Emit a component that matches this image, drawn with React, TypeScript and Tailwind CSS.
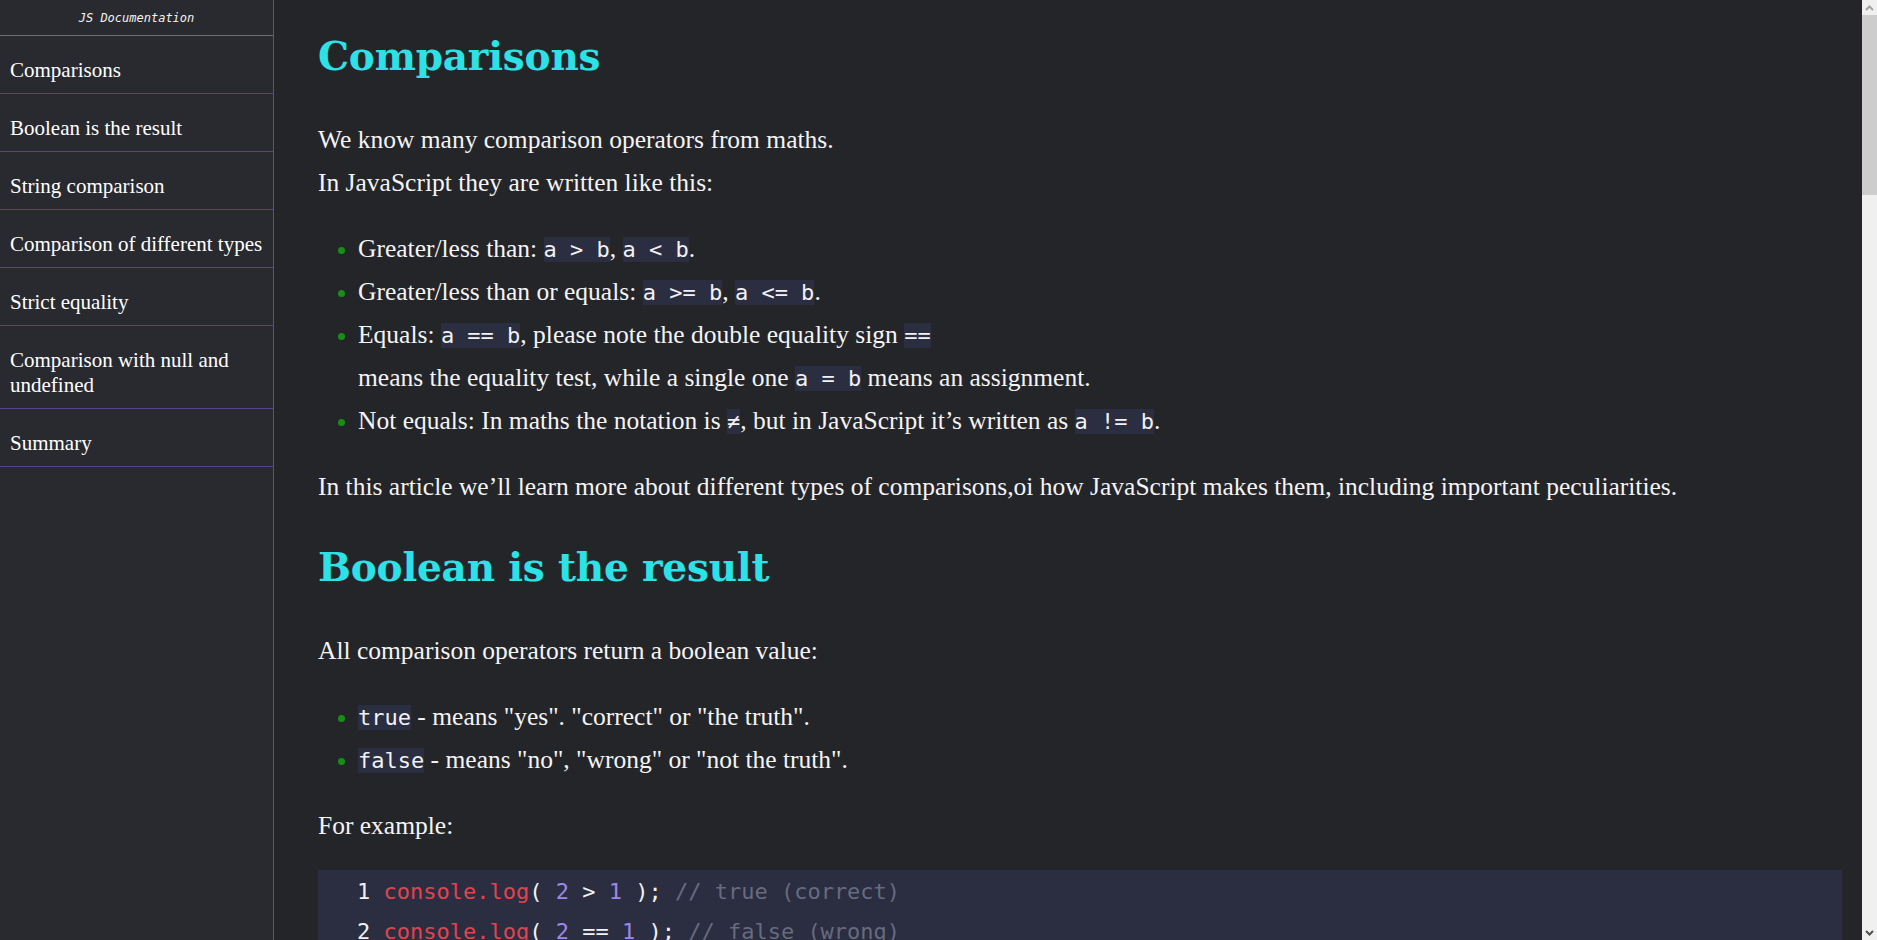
import React from "react";

const navItems = [
  "Comparisons",
  "Boolean is the result",
  "String comparison",
  "Comparison of different types",
  "Strict equality",
  "Comparison with null and undefined",
  "Summary",
];

function C({ children }: { children: React.ReactNode }) {
  return (
    <code className="bg-[#2b2d41] font-['DejaVu_Sans_Mono',monospace] text-[22px] leading-[20px] text-[#f2f2f2]">
      {children}
    </code>
  );
}

type Tok = [string, string];

function Line({ n, toks }: { n: number; toks: Tok[] }) {
  return (
    <div className="whitespace-pre">
      <span className="text-[#f2f2f2]">{n} </span>
      {toks.map((t, i) => (
        <span key={i} className={t[0]}>
          {t[1]}
        </span>
      ))}
    </div>
  );
}

const R = "text-[#e2434f]";
const W = "text-[#f2f2f2]";
const P = "text-[#9f86ea]";
const G = "text-[#676b7e]";
const K = "text-[#2fd3d8]";

function Code({ lines }: { lines: Tok[][] }) {
  return (
    <div className="bg-[#2b2d41] font-['DejaVu_Sans_Mono',monospace] text-[22px] leading-[40px] pl-[39px] pt-[2px] pb-[8px] my-[23px]">
      {lines.map((l, i) => (
        <Line key={i} n={i + 1} toks={l} />
      ))}
    </div>
  );
}

function H({ children, first }: { children: React.ReactNode; first?: boolean }) {
  return (
    <h2
      className={
        first
          ? "font-['DejaVu_Serif',serif] font-bold text-[39px] leading-[64px] tracking-[-0.2px] text-[#2de2e6] mb-[30px]"
          : "font-['DejaVu_Serif',serif] font-bold text-[39px] leading-[64px] tracking-[-0.2px] text-[#2de2e6] mt-[27px] mb-[30px]"
      }
    >
      {children}
    </h2>
  );
}

function UL({ children }: { children: React.ReactNode }) {
  return <ul className="list-disc pl-[40px] my-[23px] marker:text-[#158f15] marker:text-[23px]">{children}</ul>;
}

function ScrollBar() {
  return (
    <div className="w-[15px] shrink-0 h-full bg-[#f0f0f0] flex flex-col">
      <div className="h-[15px] flex items-center justify-center">
        <svg width="9" height="6" viewBox="0 0 9 6">
          <polyline points="1,5 4.5,1.5 8,5" fill="none" stroke="#a3a3a3" strokeWidth="2" />
        </svg>
      </div>
      <div className="h-[180px] bg-[#cdcdcd]" />
      <div className="flex-1" />
      <div className="h-[15px] flex items-center justify-center">
        <svg width="9" height="6" viewBox="0 0 9 6">
          <polyline points="1,1 4.5,4.5 8,1" fill="none" stroke="#505050" strokeWidth="2" />
        </svg>
      </div>
    </div>
  );
}

export default function App() {
  return (
    <div className="flex h-screen w-full overflow-hidden bg-[#242529]">
      <nav className="w-[274px] shrink-0 h-full bg-[#292a2f] border-r border-[#2f5bc4] text-white font-['Liberation_Serif',serif]">
        <div className="h-[36px] border-b border-[#707070] flex items-center justify-center font-['DejaVu_Sans_Mono',monospace] italic text-[12px] text-[#f2f2f2]">
          JS Documentation
        </div>
        {navItems.map((it) => (
          <a
            key={it}
            href="#"
            className="block border-b border-[#5e3d92] pt-[22px] pb-[10px] px-[10px] text-[21px] leading-[25px] text-white"
          >
            {it}
          </a>
        ))}
      </nav>
      <main className="flex-1 min-w-0 h-full overflow-hidden pl-[44px] pr-[20px] pt-[24px] pb-[40px] text-[#f4f4f4] font-['Liberation_Serif',serif] text-[25.5px] leading-[43px]">
        <H first>Comparisons</H>
        <p>We know many comparison operators from maths.</p>
        <p>In JavaScript they are written like this:</p>
        <UL>
          <li>
            Greater/less than: <C>a &gt; b</C>, <C>a &lt; b</C>.
          </li>
          <li>
            Greater/less than or equals: <C>a &gt;= b</C>, <C>a &lt;= b</C>.
          </li>
          <li>
            Equals: <C>a == b</C>, please note the double equality sign <C>==</C>
            <br />
            means the equality test, while a single one <C>a = b</C> means an assignment.
          </li>
          <li>
            Not equals: In maths the notation is <C>≠</C>, but in JavaScript it’s written as <C>a != b</C>.
          </li>
        </UL>
        <p>
          In this article we’ll learn more about different types of comparisons,oi how JavaScript makes them, including
          important peculiarities.
        </p>

        <H>Boolean is the result</H>
        <p>All comparison operators return a boolean value:</p>
        <UL>
          <li>
            <C>true</C> - means "yes". "correct" or "the truth".
          </li>
          <li>
            <C>false</C> - means "no", "wrong" or "not the truth".
          </li>
        </UL>
        <p>For example:</p>
        <Code
          lines={[
            [[R, "console.log"], [W, "( "], [P, "2"], [W, " > "], [P, "1"], [W, " ); "], [G, "// true (correct)"]],
            [[R, "console.log"], [W, "( "], [P, "2"], [W, " == "], [P, "1"], [W, " ); "], [G, "// false (wrong)"]],
            [[R, "console.log"], [W, "( "], [P, "2"], [W, " != "], [P, "1"], [W, " ); "], [G, "// true (correct)"]],
          ]}
        />
        <p>A comparison result can be assigned to a variable, just like any value:</p>
        <Code
          lines={[
            [[K, "let"], [W, " result = "], [P, "5"], [W, " > "], [P, "4"], [W, "; "], [G, "// assign the result of the comparison"]],
            [[R, "console.log"], [W, "( result ); "], [G, "// true"]],
          ]}
        />

        <H>String comparison</H>
        <p>To see whether a string is greater than another, JavaScript uses the so-called “dictionary” or “lexicographical” order.</p>
        <p>In other words, strings are compared letter-by-letter.</p>
        <p>For example:</p>
        <Code
          lines={[
            [[R, "console.log"], [W, "( "], [P, "'Z'"], [W, " > "], [P, "'A'"], [W, " ); "], [G, "// true"]],
            [[R, "console.log"], [W, "( "], [P, "'Glow'"], [W, " > "], [P, "'Glee'"], [W, " ); "], [G, "// true"]],
            [[R, "console.log"], [W, "( "], [P, "'Bee'"], [W, " > "], [P, "'Be'"], [W, " ); "], [G, "// true"]],
          ]}
        />
        <p>The algorithm to compare two strings is simple:</p>
        <UL>
          <li>Compare the first character of both strings.</li>
          <li>If the first character from the first string is greater (or less) than the other string’s, then the first string is greater (or less) than the second. We’re done.</li>
          <li>Otherwise, if both strings’ first characters are the same, compare the second characters the same way.</li>
          <li>Repeat until the end of either string.</li>
          <li>If both strings end at the same length, then they are equal. Otherwise, the longer string is greater.</li>
        </UL>

        <H>Comparison of different types</H>
        <p>When comparing values of different types, JavaScript converts the values to numbers.</p>
        <Code
          lines={[
            [[R, "console.log"], [W, "( "], [P, "'2'"], [W, " > "], [P, "1"], [W, " ); "], [G, "// true, string '2' becomes a number 2"]],
            [[R, "console.log"], [W, "( "], [P, "'01'"], [W, " == "], [P, "1"], [W, " ); "], [G, "// true, string '01' becomes a number 1"]],
          ]}
        />

        <H>Strict equality</H>
        <p>A regular equality check <C>==</C> has a problem. It cannot differentiate <C>0</C> from <C>false</C>.</p>
        <p>A strict equality operator <C>===</C> checks the equality without type conversion.</p>

        <H>Comparison with null and undefined</H>
        <p>There’s a non-intuitive behavior when <C>null</C> or <C>undefined</C> are compared to other values.</p>

        <H>Summary</H>
        <UL>
          <li>Comparison operators return a boolean value.</li>
          <li>Strings are compared letter-by-letter in the “dictionary” order.</li>
          <li>When values of different types are compared, they get converted to numbers (with the exclusion of a strict equality check).</li>
          <li>The values <C>null</C> and <C>undefined</C> equal <C>==</C> each other and do not equal any other value.</li>
        </UL>
      </main>
      <ScrollBar />
    </div>
  );
}
